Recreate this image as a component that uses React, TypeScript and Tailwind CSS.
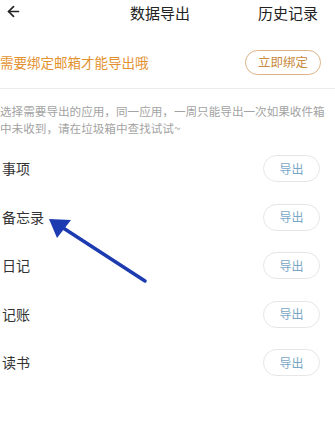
import { ArrowLeft } from "lucide-react";

const apps = ["事项", "备忘录", "日记", "记账", "读书"];

export default function App() {
  return (
    <div
      className="relative h-[423px] w-[335px] overflow-hidden bg-white"
      style={{ fontFamily: '"Noto Sans CJK SC", "Noto Sans", sans-serif' }}
    >
      <header className="flex h-[24px] items-center pl-[5px] pr-[17px]">
        <ArrowLeft className="h-[17px] w-[17px] -mt-[2px] text-[#222]" strokeWidth={2.4} />
        <div className="ml-[108px] text-[15px] leading-none text-[#222]">数据导出</div>
        <div className="ml-auto text-[15px] leading-none text-[#222]">历史记录</div>
      </header>

      <div className="mt-[26px] flex items-center justify-between pr-[14px]">
        <span className="text-[13.5px] text-[#e3922f]">需要绑定邮箱才能导出哦</span>
        <button className="flex h-[25px] w-[76px] items-center justify-center rounded-full border border-[#dcb587] text-[12.5px] text-[#c88a3f]">
          立即绑定
        </button>
      </div>

      <div className="mt-[13px] h-px bg-[#ececec]" />

      <p className="mt-[14px] pr-[6px] text-[11.6px] leading-[17px] text-[#a3a3a3]">
        选择需要导出的应用，同一应用，一周只能导出一次如果收件箱中未收到，请在垃圾箱中查找试试~
      </p>

      <ul className="mt-[18px] flex flex-col gap-[21.5px] pl-[2px] pr-[15px]">
        {apps.map((name) => (
          <li key={name} className="flex h-[27px] items-center justify-between">
            <span className="text-[14px] text-[#333]">{name}</span>
            <button className="flex h-[27px] w-[57px] items-center justify-center rounded-full border border-[#e6e6e6] text-[12px] text-[#7aa6c6]">
              导出
            </button>
          </li>
        ))}
      </ul>

      <svg className="pointer-events-none absolute left-0 top-0" width="335" height="423">
        <line x1="145" y1="281" x2="54" y2="222" stroke="#1d3bb0" strokeWidth="3.5" strokeLinecap="round" />
        <polygon points="49,219 71,220 57,238" fill="#1d3bb0" />
      </svg>
    </div>
  );
}
